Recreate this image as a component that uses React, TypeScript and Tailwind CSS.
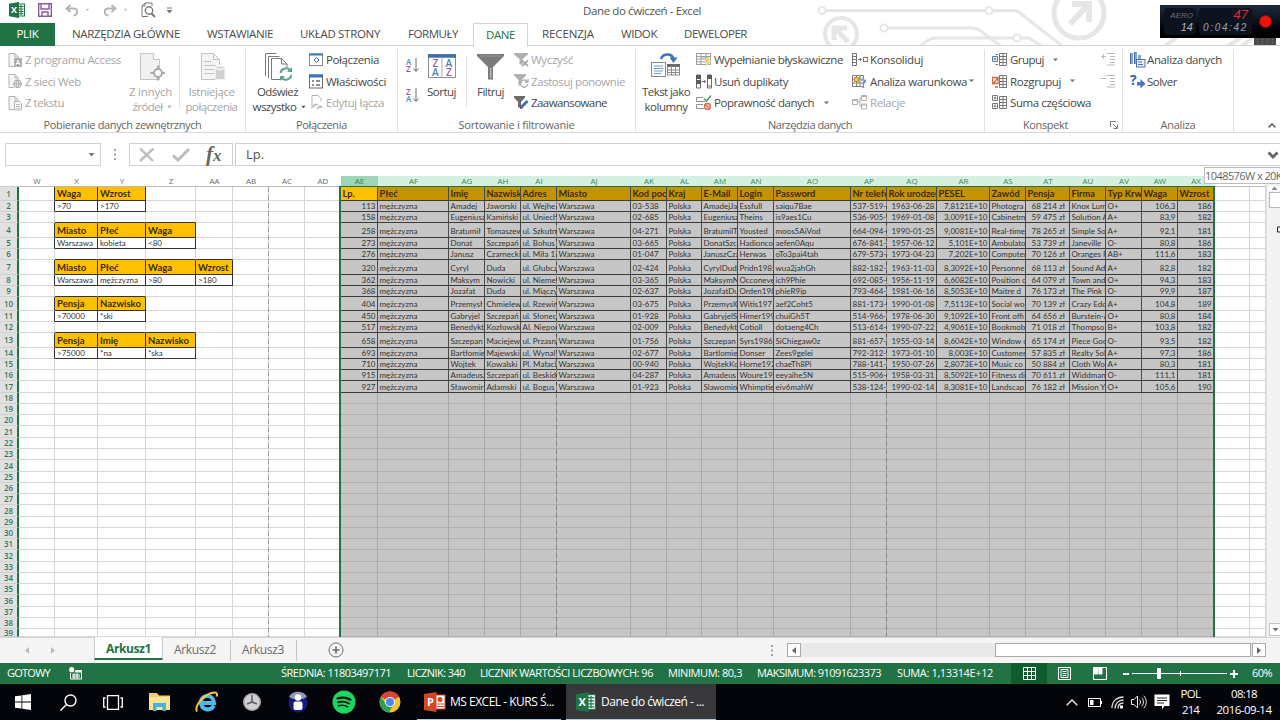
import { useLayoutEffect, useRef, useState } from 'react';
import type { ReactNode } from 'react';
import clsx from 'clsx';

// One-line label that is tracked in or out until it fills `w` pixels
function Fit({ w, className, children }: { w: number; className?: string; children: string }) {
  const ref = useRef<HTMLSpanElement>(null);
  const [spacing, setSpacing] = useState(0);

  useLayoutEffect(() => {
    if (!ref.current) return;
    const natural = ref.current.getBoundingClientRect().width;
    setSpacing((w - natural) / children.length);
  }, [w, children]);

  return (
    <span ref={ref} className={clsx('inline-block whitespace-nowrap shrink-0', className)} style={{ letterSpacing: spacing }}>
      {children}
    </span>
  );
}

const Arrow = ({ className }: { className?: string }) => (
  <svg className={clsx('w-[7px] h-[4px] shrink-0', className)} viewBox="0 0 7 4" fill="currentColor">
    <path d="M0.5 0h6L3.5 3.5z" />
  </svg>
);

/* ---------- icons ---------- */

const Page = ({ children }: { children?: ReactNode }) => (
  <svg className="w-[14px] h-[16px]" viewBox="0 0 14 16" fill="none" stroke="#b3b3b3">
    <path d="M6 14.5H1V1.5h6l3 3V7M7 1.5v3.5h3" fill="#f6f6f6" />
    {children}
  </svg>
);

const AccessIcon = () => (
  <Page>
    <rect x="6.5" y="6.5" width="7" height="8" fill="#a8a8a8" />
    <path d="M8 13l2-5 2 5M8.7 11.5h2.6" stroke="#fff" />
  </Page>
);

const WebIcon = () => (
  <Page>
    <circle cx="9.5" cy="10.8" r="3.9" fill="#eee" stroke="#a6a6a6" />
    <path d="M5.6 10.8h7.8M9.5 7c-2 2.5-2 5.2 0 7.7M9.5 7c2 2.5 2 5.2 0 7.7" stroke="#a6a6a6" />
  </Page>
);

const TextIcon = () => (
  <Page>
    <path d="M6.5 6.5h5l2 2v6.5h-7z" fill="#fafafa" />
    <path d="M8 9.5h4M8 11.5h4M8 13.2h4" strokeWidth="0.8" />
  </Page>
);

const OtherSourcesIcon = () => (
  <svg className="w-[28px] h-[28px]" viewBox="0 0 28 28" fill="none" stroke="#c4c4c4">
    <path d="M3.5 0.5h13l6 6v20h-19z" fill="#f1f1f1" />
    <path d="M16.5 0.5v6h6" fill="#fff" />
    <circle cx="21" cy="20" r="4" fill="#fff" stroke="#a9a9a9" strokeWidth="2" />
    <path d="M21 12.5v4M21 23.5v4M13.5 20h4M24.5 20h3.5" stroke="#a9a9a9" strokeWidth="2" />
  </svg>
);

const ConnectionsBigIcon = () => (
  <svg className="w-[28px] h-[28px]" viewBox="0 0 28 28" fill="none" stroke="#c4c4c4">
    <path d="M3.5 0.5h12l6 6v20h-18z" fill="#f4f4f4" />
    <path d="M15.5 0.5v6h6M6 8.5h7M6 12.5h12M6 16.5h11M6 20.5h10" />
    <path d="M17 14.5v11c0 2 10 2 10 0v-11" fill="#d0d0d0" stroke="#fff" />
    <ellipse cx="22" cy="14.5" rx="5" ry="2" fill="#dcdcdc" stroke="#fff" />
  </svg>
);

const RefreshIcon = () => (
  <svg className="w-[28px] h-[28px]" viewBox="0 0 28 28" fill="none" stroke="#7a7a7a">
    <path d="M1.5 23V0.5h11M4.5 25V3.5h11" />
    <path d="M7.5 5.5h10l5.5 5.5v15.5H7.5z" fill="#fff" />
    <path d="M17.5 5.5V11H23" />
    <circle cx="22" cy="21" r="7" fill="#fff" stroke="none" />
    <path d="M16.5 20c1-5 7-6 9.5-3M27.5 22c-1 5-7 6-9.5 3" stroke="#5aa584" strokeWidth="2" />
    <path d="M28 14v5h-5zM16 28v-5h5z" fill="#5aa584" stroke="none" />
  </svg>
);

const LinkTableIcon = () => (
  <svg className="w-[14px] h-[14px]" viewBox="0 0 14 14" fill="none" stroke="#7d8b99">
    <rect x="0.5" y="1" width="13" height="11.5" fill="#fff" />
    <path d="M0 1.5h14" stroke="#3f73b5" strokeWidth="2" />
    <path d="M7.5 4.5L10 7 7.500 9.500 5 7z" stroke="#3f73b5" />
  </svg>
);

const PropsIcon = () => (
  <svg className="w-[14px] h-[15px]" viewBox="0 0 14 15" fill="none" stroke="#6b6b6b">
    <rect x="0.5" y="1" width="13" height="13" fill="#fff" />
    <path d="M0 2h14" stroke="#3f73b5" strokeWidth="3" />
    <path d="M3 7h2M3 11h2M7 7h4M7 11h4" strokeWidth="1.3" />
  </svg>
);

const EditLinksIcon = () => (
  <svg className="w-[14px] h-[15px]" viewBox="0 0 14 15" fill="none" stroke="#b3b3b3">
    <path d="M3 13.5V0.5h6l3 3v3" />
    <path d="M4 12l2-2.5h3M8 14l3-3 2 1.5" strokeWidth="1.6" />
  </svg>
);

const SortIcon = ({ top, bottom }: { top: string; bottom: string }) => (
  <svg className="w-[14px] h-[17px]" viewBox="0 0 14 17" fontFamily="Open Sans, sans-serif" fontSize="8" fontWeight="600">
    <text x="0" y="7.5" fill={top === 'A' ? '#4a86b8' : '#9055a8'}>{top}</text>
    <text x="0" y="15" fill={bottom === 'A' ? '#4a86b8' : '#9055a8'}>{bottom}</text>
    <path d="M10 1v13M7.5 11.5l2.5 3 2.5-3" fill="none" stroke="#6d6d6d" />
  </svg>
);

const SortBigIcon = () => (
  <svg className="w-[28px] h-[26px]" viewBox="0 0 28 26" fontFamily="Open Sans, sans-serif" fontSize="10" fontWeight="600">
    <rect x="0.5" y="1.5" width="27" height="23" fill="#fff" stroke="#8f8f8f" />
    <path d="M0 3h28" stroke="#3f6fa8" strokeWidth="3.5" />
    <path d="M14 5v19" stroke="#a8a8a8" />
    <text x="4.5" y="14" fill="#9055a8">Z</text>
    <text x="4" y="23" fill="#4a86b8">A</text>
    <text x="17.5" y="14" fill="#4a86b8">A</text>
    <text x="18" y="23" fill="#9055a8">Z</text>
  </svg>
);

const FunnelBigIcon = () => (
  <svg className="w-[27px] h-[28px]" viewBox="0 0 27 28">
    <path d="M0 1h27v2L16 14v12.500h-5V14L0 3z" fill="#7b7b7b" />
    <path d="M13 15h1.500v10H13z" fill="#b9b9b9" />
    <path d="M3 3h21" stroke="#999" />
  </svg>
);

const ClearFilterIcon = () => (
  <svg className="w-[15px] h-[16px]" viewBox="0 0 15 16" fill="none">
    <path d="M0 1h14v1.5L8.5 7v5.5h-3V7L0 2.5z" fill="#b0b0b0" />
    <path d="M8 8.5l6 5.5M14 8.5L8 14" stroke="#a9a9a9" strokeWidth="1.8" />
  </svg>
);

const ReapplyIcon = () => (
  <svg className="w-[15px] h-[16px]" viewBox="0 0 15 16" fill="none">
    <path d="M0 1h12v1.5L7.5 7v5.5h-3V7L0 2.5z" fill="#b0b0b0" />
    <path d="M6.5 10a3.6 3.6 0 016.5-1.5M13.7 11a3.6 3.6 0 01-6.5 1.7M14 6v3h-3" stroke="#a9a9a9" strokeWidth="1.3" />
  </svg>
);

const AdvancedIcon = () => (
  <svg className="w-[15px] h-[16px]" viewBox="0 0 15 16" fill="none">
    <path d="M0 1h11v1.5L7 7v5.5H4V7L0 2.5z" fill="#6b6b6b" />
    <path d="M13.5 6l-6 6" stroke="#3f73b5" strokeWidth="3" />
    <path d="M6 14l0.5-3 2.5 2.3z" fill="#4a4a4a" />
  </svg>
);

const TextToColumnsIcon = () => (
  <svg className="w-[30px] h-[26px]" viewBox="0 0 30 26" fill="none" stroke="#8a8a8a">
    <rect x="0.5" y="9.5" width="14" height="14" fill="#fff" />
    <path d="M3 13h9M3 15.5h9M3 18h9M3 20.5h7" stroke="#6f9ac8" />
    <rect x="16.5" y="12" width="12" height="10" fill="#fff" />
    <path d="M16 12.5h13" strokeWidth="3" stroke="#6b6b6b" />
    <path d="M20.5 13v9M24.5 13v9M16.5 17h12M16.5 19.5h12" />
    <path d="M10 6c2-6 11-6 12.500 0" stroke="#3f73b5" strokeWidth="2.5" />
    <path d="M18.5 4.5h8L22.5 10z" fill="#3f73b5" stroke="none" />
  </svg>
);

const FlashFillIcon = () => (
  <svg className="w-[16px] h-[16px]" viewBox="0 0 16 16" fill="none" stroke="#9c9c9c">
    <path d="M0.5 1.5h14v11H0.5zM0.5 4.5h14M0.5 7h14M0.5 9.8h14M5 2v10.5M10 2v10.5" fill="#fff" />
    <path d="M5.5 5h8" stroke="#80aa80" />
    <path d="M10.5 6h4l-2 3h2.5l-5.5 6.5 1.5-5H9z" fill="#f3c558" stroke="#fff" strokeWidth="0.5" />
  </svg>
);

const DuplicatesIcon = () => (
  <svg className="w-[16px] h-[15px]" viewBox="0 0 16 15" fill="none" stroke="#6a6a6a">
    <path d="M0.5 1h4v13h-4zM11.5 1h4v13h-4z" fill="#fff" />
    <path d="M0 3h5M0 8h5M11 3h5" stroke="#5a5a5a" strokeWidth="4" />
    <path d="M11 12h5M5.5 7.5h4M8 5.8l1.7 1.7L8 9.2" />
  </svg>
);

const ValidationIcon = () => (
  <svg className="w-[16px] h-[16px]" viewBox="0 0 16 16" fill="none" stroke="#8f8f8f">
    <path d="M7 2.5H0.5v4H9M7 9.5H0.5v4H8" />
    <path d="M8 3.5l2.5 2.5L15 0.5" stroke="#4ea072" strokeWidth="1.6" />
    <circle cx="11.5" cy="11.5" r="3" fill="#fbe4e0" stroke="#d9695a" strokeWidth="1.4" />
    <path d="M9.5 9.5l4 4" stroke="#d9695a" strokeWidth="1.2" />
  </svg>
);

const ConsolidateIcon = () => (
  <svg className="w-[16px] h-[14px]" viewBox="0 0 16 14" fill="none" stroke="#737373">
    <path d="M0.5 0.5h4v12h-4zM0.5 3.5h4M0.5 6.5h4M0.5 9.5h4M6 6.5h3M8 5l1.5 1.5L8 8" />
    <rect x="11.5" y="4.5" width="4" height="4" stroke="#c85a54" />
  </svg>
);

const WhatIfIcon = () => (
  <svg className="w-[16px] h-[15px]" viewBox="0 0 16 15" fill="none" stroke="#7d7d7d">
    <path d="M0.5 1.5h11v11h-11zM0.5 5h11M0.5 9h11M4.5 2v10M8 2v10" fill="#fff" />
    <rect x="2.5" y="3.5" width="4" height="4" fill="#f6c25b" stroke="#c79331" />
    <text x="8.5" y="13.5" fontFamily="Open Sans, sans-serif" fontSize="12" fontWeight="700" fill="#3b62a8" stroke="#fff" strokeWidth="0.3">?</text>
  </svg>
);

const RelationsIcon = () => (
  <svg className="w-[16px] h-[15px]" viewBox="0 0 16 15" fill="none" stroke="#b0b0b0">
    <path d="M0.5 4.5h5v5h-5zM9.5 0.5h5v5h-5zM9.5 9h5v5h-5zM5.5 7h2.5V3h1.5M8 7v4.5h1.5" />
    <path d="M0.5 5.5h5M9.5 1.5h5M9.5 10h5" />
  </svg>
);

const GroupIcon = ({ kind }: { kind: 'group' | 'ungroup' | 'subtotal' }) => (
  <svg className="w-[16px] h-[15px]" viewBox="0 0 16 15" fill="none" stroke="#787878">
    <path d="M7.5 1.5h7v12h-7zM7.5 4.5h7M7.5 7.5h7M7.5 10.5h7M11 1.5v12" />
    {kind === 'group' && <path d="M6 2.5H3.5M6 12.5H3.5M0.5 4.5h5v5h-5zM3 5.5v3M1.5 7h3" stroke="#5b7795" />}
    {kind === 'ungroup' && <path d="M0.5 3.5h5.5v6H0.5zM0.5 10.5l6-7.5M3 13h3" stroke="#cf6a45" strokeWidth="1.3" />}
    {kind === 'subtotal' && <path d="M0.5 0.5h5v5h-5zM0.5 8.5h5v5h-5zM3 1.5v3M1.5 3h3M3 9.5v3M1.5 11h3" />}
  </svg>
);

const DetailIcon = ({ plus }: { plus?: boolean }) => (
  <svg className="w-[15px] h-[14px]" viewBox="0 0 15 14" fill="none" stroke="#b9b9b9">
    <path d="M6 1.5h8M9 4.5h5M9 7.5h5M9 10.5h5M6 13h8" />
    <path d="M0 4.5h5" />
    {plus && <path d="M2.5 2v5" />}
  </svg>
);

const AnalysisIcon = () => (
  <svg className="w-[16px] h-[16px]" viewBox="0 0 16 16" fill="none">
    <path d="M0 1h3v11H0zM4 0h3v12H4zM8 3h3v6H8z" fill="#8aa6cf" />
    <path d="M0.5 1v11M4.5 0v12" stroke="#4a6fae" />
    <rect x="6.5" y="7.5" width="8.5" height="7.5" fill="#eef3fb" stroke="#4a6fae" />
    <path d="M8 10h4M8 12.5h5" stroke="#4a6fae" />
  </svg>
);

const SolverIcon = () => (
  <svg className="w-[16px] h-[16px]" viewBox="0 0 16 16">
    <text x="0" y="12" fontFamily="Open Sans, sans-serif" fontSize="14" fontWeight="700" fill="#3462b5">?</text>
    <path d="M7 9h3.500V6l5 4.700-5 4.700v-3H7z" fill="#4a77c7" />
  </svg>
);

const ExcelLogo = ({ className }: { className?: string }) => (
  <svg className={className} viewBox="0 0 16 16" fontFamily="Open Sans, sans-serif" fontSize="9" fontWeight="700">
    <rect x="8" y="2" width="7.5" height="12" fill="#fff" stroke="#217346" />
    <path d="M9.5 4.5h5M9.5 7h5M9.5 9.5h5M9.5 11.8h5M12 3v10" stroke="#217346" />
    <path d="M0 1.7L10 0v16L0 14.3z" fill="#217346" />
    <text x="2" y="11.2" fill="#fff">X</text>
  </svg>
);

/* ---------- title bar and tabs ---------- */

const Circuit = () => (
  <svg className="absolute right-0 top-0 w-[480px] h-[45px]" viewBox="800 0 480 45" fill="none" stroke="#e6e6e6" strokeWidth="3">
    <circle cx="822" cy="10.5" r="3.5" strokeWidth="2" />
    <path d="M826 10.5h159" />
    <circle cx="989" cy="10.5" r="3.5" strokeWidth="2" />
    <path d="M993 10.5h20c5 0 7 2 10 5l40 31" />
    <circle cx="884" cy="28" r="3.5" strokeWidth="2" />
    <path d="M888 28h85c4 0 6 2 9 4l20 15" />
    <path d="M921 46c5-6 10-8 16-8h76" />
    <circle cx="1017" cy="38" r="3.5" strokeWidth="2" />
    <path d="M1021 38h8l14 9" />
    <circle cx="841" cy="34" r="16" strokeWidth="4" />
    <path d="M848 42l-12-13M834 40V28h13" strokeWidth="5" />
    <circle cx="1079" cy="13" r="25" strokeWidth="5" />
    <path d="M1070 24l18-19M1072 4h17v18" strokeWidth="6" />
    <path d="M1165 46l12-9M1228 46l14-9M1242 46l10-8" strokeWidth="4" />
  </svg>
);

const Recorder = () => (
  <div className="absolute left-[1160px] top-[5px] w-[120px]">
    <div className="h-[33px] bg-gradient-to-b from-[#1d2a3c] via-[#0b111b] to-black flex items-center gap-[3px] pl-1 italic font-['Liberation_Sans',sans-serif]">
      <div className="w-[32px] h-[27px] rounded-sm bg-[#0c131e] flex flex-col items-end justify-center pr-[3px]">
        <span className="text-[8px] leading-[11px] text-[#68717e]">AERO</span>
        <span className="text-[11px] leading-[13px] text-[#a9b1bc]">14</span>
      </div>
      <div className="w-[53px] h-[27px] rounded-sm bg-[#0c131e] flex flex-col items-end justify-center pr-[4px]">
        <span className="text-[13px] leading-[12px] text-[#e02a35]">47</span>
        <Fit w={45} className="text-[10px] leading-[13px] text-[#99a1ad]">0:04:42</Fit>
      </div>
      <span className="w-[13px] h-[13px] ml-[4px] rounded-full bg-[#f01208] border border-[#7d1010]" />
    </div>
    <div className="ml-[94px] w-[22px] h-[7px] bg-[#4a4a4a] text-[5px] leading-[7px] text-center text-[#999]">⋮⋮⋮⋮</div>
  </div>
);

const QuickAccess = () => (
  <div className="h-[23px] flex items-center pl-[9px] pb-[3px]">
    <ExcelLogo className="w-[16px] h-[16px]" />
    <svg className="w-[14px] h-[14px] ml-[13px]" viewBox="0 0 14 14" fill="none" stroke="#8a5aa6" strokeWidth="1.4">
      <path d="M0.7 0.7h12.6v12.6H0.7zM3 1v5h8V1M4 13V9h6v4" />
    </svg>
    <svg className="w-[14px] h-[13px] ml-[13px] text-[#b5b5b5]" viewBox="0 0 14 13" fill="none" stroke="currentColor" strokeWidth="2">
      <path d="M5.5 1L1.5 4.5l4 3.5M2 4.5h6.5c5 0 5 6.5 0 7" />
    </svg>
    <Arrow className="ml-[5px] text-[#c9c9c9] scale-75" />
    <svg className="w-[14px] h-[13px] ml-[12px] text-[#b5b5b5]" viewBox="0 0 14 13" fill="none" stroke="currentColor" strokeWidth="2">
      <path d="M8.5 1l4 3.5-4 3.5M12 4.5H5.5c-5 0-5 6.5 0 7" />
    </svg>
    <Arrow className="ml-[5px] text-[#c9c9c9] scale-75" />
    <svg className="w-[15px] h-[16px] ml-[12px]" viewBox="0 0 15 16" fill="none" stroke="#777">
      <path d="M11 4V1H4L1 4v10.5h6M4 1v3H1" />
      <circle cx="8" cy="8.5" r="3.7" fill="#fff" strokeWidth="1.4" />
      <path d="M10.5 11.5l3.5 3.5" strokeWidth="2" />
    </svg>
    <svg className="w-[7px] h-[7px] ml-[10px]" viewBox="0 0 7 7" fill="#777">
      <path d="M1 0.5h5v1H1zM0.5 3h6L3.5 6.5z" />
    </svg>
  </div>
);

const Tabs = () => (
  <div className="h-[23px] flex items-center text-[11.5px] text-[#4b4b4b] border-b border-[#d4d4d4]">
    <div className="w-[55px] h-[23px] bg-[#217346] text-white flex items-center justify-center">
      <Fit w={22}>PLIK</Fit>
    </div>
    <Fit w={108} className="ml-[17px]">NARZĘDZIA GŁÓWNE</Fit>
    <Fit w={66} className="ml-[27px]">WSTAWIANIE</Fit>
    <Fit w={80} className="ml-[27px]">UKŁAD STRONY</Fit>
    <Fit w={50} className="ml-[28px]">FORMUŁY</Fit>
    <div className="ml-[15px] w-[55px] h-[24px] -mb-px bg-white border border-b-0 border-[#d4d4d4] text-[#217346] flex items-center justify-center pb-px z-10">
      <Fit w={29}>DANE</Fit>
    </div>
    <Fit w={52} className="ml-[14px]">RECENZJA</Fit>
    <Fit w={36} className="ml-[27px]">WIDOK</Fit>
    <Fit w={63} className="ml-[27px]">DEWELOPER</Fit>
  </div>
);

/* ---------- ribbon ---------- */

type ToolProps = { icon: ReactNode; w: number; label: string; dim?: boolean; arrow?: string; iconBox?: string };

const Tool = ({ icon, w, label, dim, arrow, iconBox = 'w-[17px]' }: ToolProps) => (
  <div className={clsx('h-[21.5px] flex items-center', dim ? 'text-[#a6a6a6]' : 'text-[#484848]')}>
    <span className={clsx('shrink-0', iconBox)}>{icon}</span>
    <Fit w={w}>{label}</Fit>
    {arrow && <Arrow className={clsx('text-[#777] scale-90', arrow)} />}
  </div>
);

const BigTool = ({ icon, lines, className, dim, arrow }: { icon: ReactNode; lines: [string, number][]; className: string; dim?: boolean; arrow?: boolean }) => (
  <div className={clsx('flex flex-col items-center pt-[4px] shrink-0', dim ? 'text-[#a6a6a6]' : 'text-[#484848]', className)}>
    <div className="h-[31px]">{icon}</div>
    {lines.map(([text, w], i) => (
      <div key={text} className="h-[15px] leading-[15px] flex items-center gap-[3px]">
        <Fit w={w}>{text}</Fit>
        {arrow && i === lines.length - 1 && <Arrow className="scale-75 -mr-1" />}
      </div>
    ))}
  </div>
);

const Group = ({ className, title, titleW, launcher, children }: { className: string; title: string; titleW: number; launcher?: boolean; children: ReactNode }) => (
  <div className={clsx('h-[83px] mt-[3px] flex flex-col shrink-0 border-r border-[#e1e1e1]', className)}>
    <div className="h-[69px] flex">{children}</div>
    <div className="h-[14px] flex items-center justify-center text-[#666] text-[11px]">
      <Fit w={titleW} className={launcher ? 'ml-[38px]' : ''}>{title}</Fit>
      {launcher && (
        <svg className="w-[8px] h-[8px] ml-auto mr-[4px]" viewBox="0 0 8 8" fill="none" stroke="#777">
          <path d="M0.5 6V0.5H6M3 3l4 4M7.5 3.5v4h-4" />
        </svg>
      )}
    </div>
  </div>
);

const Divider = () => <div className="w-px h-[51px] mt-[7px] bg-[#e1e1e1] shrink-0" />;

const Ribbon = () => (
  <div className="h-[87px] flex text-[11.5px] border-b border-[#d9d9d9]">
    <Group className="w-[246px]" title="Pobieranie danych zewnętrznych" titleW={158}>
      <div className="w-[124px] pl-[8px]">
        <Tool dim icon={<AccessIcon />} label="Z programu Access" w={96} />
        <Tool dim icon={<WebIcon />} label="Z sieci Web" w={56} />
        <Tool dim icon={<TextIcon />} label="Z tekstu" w={39} />
      </div>
      <BigTool dim arrow className="w-[53px]" icon={<OtherSourcesIcon />} lines={[['Z innych', 43], ['źródeł', 30]]} />
      <div className="w-[2px]" />
      <Divider />
      <BigTool dim className="w-[63px]" icon={<ConnectionsBigIcon />} lines={[['Istniejące', 46], ['połączenia', 52]]} />
    </Group>

    <Group className="w-[152px]" title="Połączenia" titleW={51}>
      <BigTool arrow className="w-[63px]" icon={<RefreshIcon />} lines={[['Odśwież', 41], ['wszystko', 44]]} />
      <div>
        <Tool icon={<LinkTableIcon />} label="Połączenia" w={53} />
        <Tool icon={<PropsIcon />} label="Właściwości" w={60} />
        <Tool dim icon={<EditLinksIcon />} label="Edytuj łącza" w={58} />
      </div>
    </Group>

    <Group className="w-[238px]" title="Sortowanie i filtrowanie" titleW={116}>
      <div className="w-[28px] pl-[8px] pt-[8px] flex flex-col gap-[13px]">
        <SortIcon top="A" bottom="Z" />
        <SortIcon top="Z" bottom="A" />
      </div>
      <BigTool className="w-[31px]" icon={<SortBigIcon />} lines={[['Sortuj', 29]]} />
      <div className="w-[9px]" />
      <Divider />
      <BigTool className="w-[47px]" icon={<FunnelBigIcon />} lines={[['Filtruj', 27]]} />
      <div>
        <Tool dim icon={<ClearFilterIcon />} label="Wyczyść" w={42} />
        <Tool dim icon={<ReapplyIcon />} label="Zastosuj ponownie" w={94} />
        <Tool icon={<AdvancedIcon />} label="Zaawansowane" w={76} />
      </div>
    </Group>

    <Group className="w-[349px]" title="Narzędzia danych" titleW={84}>
      <BigTool className="w-[60px]" icon={<TextToColumnsIcon />} lines={[['Tekst jako', 48], ['kolumny', 43]]} />
      <div className="w-[156px]">
        <Tool iconBox="w-[18px]" icon={<FlashFillIcon />} label="Wypełnianie błyskawiczne" w={129} />
        <Tool iconBox="w-[18px]" icon={<DuplicatesIcon />} label="Usuń duplikaty" w={74} />
        <Tool iconBox="w-[18px]" icon={<ValidationIcon />} label="Poprawność danych" w={100} arrow="ml-[9px]" />
      </div>
      <div>
        <Tool iconBox="w-[18px]" icon={<ConsolidateIcon />} label="Konsoliduj" w={53} />
        <Tool iconBox="w-[18px]" icon={<WhatIfIcon />} label="Analiza warunkowa" w={97} arrow="ml-[1px]" />
        <Tool iconBox="w-[18px]" dim icon={<RelationsIcon />} label="Relacje" w={35} />
      </div>
    </Group>

    <Group className="w-[138px]" title="Konspekt" titleW={45} launcher>
      <div className="w-[116px] pl-[7px]">
        <Tool iconBox="w-[18px]" icon={<GroupIcon kind="group" />} label="Grupuj" w={34} arrow="ml-[8px]" />
        <Tool iconBox="w-[18px]" icon={<GroupIcon kind="ungroup" />} label="Rozgrupuj" w={51} arrow="ml-[8px]" />
        <Tool iconBox="w-[18px]" icon={<GroupIcon kind="subtotal" />} label="Suma częściowa" w={81} />
      </div>
      <div className="pt-[3px] flex flex-col gap-[8px]">
        <DetailIcon plus />
        <DetailIcon />
      </div>
    </Group>

    <Group className="w-[111px]" title="Analiza" titleW={35}>
      <div className="pl-[7px]">
        <Tool icon={<AnalysisIcon />} label="Analiza danych" w={75} />
        <Tool icon={<SolverIcon />} label="Solver" w={30} />
      </div>
    </Group>

    <svg className="w-[8px] h-[5px] ml-[34px] mt-[77px]" viewBox="0 0 8 5" fill="none" stroke="#666" strokeWidth="1.7">
      <path d="M0.7 4.3L4 1l3.3 3.3" />
    </svg>
  </div>
);

const FormulaBar = () => (
  <div className="h-[43px] pt-[10px] flex text-[#555]">
    <div className="w-[96px] h-[23px] ml-[5px] border border-[#d0d0d0] flex items-center justify-end pr-[5px]">
      <Arrow className="text-[#777]" />
    </div>
    <div className="w-[28px] flex justify-center pt-[6px]">
      <svg className="w-[2px] h-[11px]" viewBox="0 0 2 11" fill="#a5a5a5">
        <path d="M0 0h2v2H0zM0 4.5h2v2H0zM0 9h2v2H0z" />
      </svg>
    </div>
    <div className="w-[104px] h-[23px] border border-[#d0d0d0] flex items-center pl-[9px]">
      <svg className="w-[16px] h-[14px]" viewBox="0 0 16 14" stroke="#bdbdbd" strokeWidth="2.4">
        <path d="M1 0.5l13 12.5M14.5 0.5L1 13" />
      </svg>
      <svg className="w-[18px] h-[14px] ml-[17px]" viewBox="0 0 18 14" fill="none" stroke="#bdbdbd" strokeWidth="3">
        <path d="M1 7.5l5 4.5L17 1" />
      </svg>
      <span className="ml-[16px] -mt-[1px] italic font-bold text-[21px] leading-none text-[#666] font-['Liberation_Serif',serif]">
        f<span className="text-[17px]">x</span>
      </span>
    </div>
    <div className="flex-1 h-[23px] ml-[2px] border border-r-0 border-[#d0d0d0] flex items-center pl-[10px] pr-[1px]">
      <Fit w={18} className="text-[13px] text-[#555]">Lp.</Fit>
      <svg className="w-[12px] h-[8px] ml-auto" viewBox="0 0 12 8" fill="none" stroke="#666" strokeWidth="2.8">
        <path d="M1.5 1.5L6 6l4.5-4.5" />
      </svg>
    </div>
  </div>
);

/* ---------- sheet ---------- */

const columns = ['W', 'X', 'Y', 'Z', 'AA', 'AB', 'AC', 'AD', 'AE', 'AF', 'AG', 'AH', 'AI', 'AJ', 'AK', 'AL', 'AM', 'AN', 'AO', 'AP', 'AQ', 'AR', 'AS', 'AT', 'AU', 'AV', 'AW', 'AX', '', ''];
const FIRST = 8;
const LAST = 27;

const people = [
  'Lp.|Płeć|Imię|Nazwisko|Adres|Miasto|Kod pocztowy|Kraj|E-Mail|Login|Password|Nr telefonu|Rok urodzenia|PESEL|Zawód|Pensja|Firma|Typ Krwi|Waga|Wzrost',
  '113|mężczyzna|Amadej|Jaworski|ul. Wejhe|Warszawa|03-538|Polska|AmadejJaw|Essfull|saiqu7Bae|537-519-|1963-06-28|7,8121E+10|Photogra|68 214 zł|Knox Lumb|O+|106,3|186',
  '158|mężczyzna|Eugeniusz|Kamiński|ul. Uniech|Warszawa|02-685|Polska|Eugeniusz|Theins|is9aes1Cu|536-905-|1969-01-08|3,0091E+10|Cabinetm|59 475 zł|Solution A|A+|83,9|182',
  '258|mężczyzna|Bratumił|Tomaszew|ul. Szkutn|Warszawa|04-271|Polska|BratumilT|Yousted|moos5AiVod|664-094-|1990-01-25|9,0081E+10|Real-time|78 265 zł|Simple So|A+|92,1|181',
  '273|mężczyzna|Donat|Szczepań|ul. Bohus|Warszawa|03-665|Polska|DonatSzc|Hadionco|aefen0Aqu|676-841-|1957-06-12|5,101E+10|Ambulato|53 739 zł|Janeville|O-|80,8|186',
  '276|mężczyzna|Janusz|Czarnecki|ul. Miła 17|Warszawa|01-047|Polska|JanuszCza|Herwas|oTo3pai4tah|679-573-|1973-04-23|7,202E+10|Computer|70 126 zł|Oranges R|AB+|111,6|183',
  '320|mężczyzna|Cyryl|Duda|ul. Głubcz|Warszawa|02-424|Polska|CyrylDuda|Pridn1985|wua2jahGh|882-182-|1963-11-03|8,3092E+10|Personne|68 113 zł|Sound Ad|A+|82,8|182',
  '362|mężczyzna|Maksym|Nowicki|ul. Niemen|Warszawa|03-365|Polska|MaksymN|Occoneve|ich9Phie|692-085-|1956-11-19|6,6082E+10|Position c|64 079 zł|Town and|O+|94,3|183',
  '368|mężczyzna|Jozafat|Duda|ul. Miączy|Warszawa|02-637|Polska|JozafatDu|Orden198|phieR9ip|793-464-|1981-06-16|8,5053E+10|Maitre d|76 173 zł|The Pink P|O-|99,9|187',
  '404|mężczyzna|Przemysł|Chmielew|ul. Rzewin|Warszawa|03-675|Polska|PrzemyslC|Witis197|aef2Coht5|881-173-|1990-01-08|7,5113E+10|Social wo|70 139 zł|Crazy Edd|A+|104,8|189',
  '450|mężczyzna|Gabryjel|Szczepań|ul. Słonec|Warszawa|01-928|Polska|GabryjelS|Himer199|chuiGh5T|514-966-|1978-06-30|9,1092E+10|Front offi|64 656 zł|Burstein-A|O+|80,8|184',
  '517|mężczyzna|Benedykt|Kozłowsk|Al. Niepod|Warszawa|02-009|Polska|Benedykt|Cotioll|dotaeng4Ch|513-614-|1990-07-22|4,9061E+10|Bookmob|71 018 zł|Thompso|B+|103,8|182',
  '658|mężczyzna|Szczepan|Maciejew|ul. Przasn|Warszawa|01-756|Polska|Szczepan|Syrs1986|SiChiegaw0z|881-657-|1955-03-14|8,6042E+10|Window c|65 174 zł|Piece Goo|O-|93,5|182',
  '693|mężczyzna|Bartłomiej|Majewski|ul. Wynal|Warszawa|02-677|Polska|Bartlomie|Donser|Zees9gelei|792-312-|1973-01-10|8,003E+10|Customer|57 835 zł|Realty Sol|A+|97,3|186',
  '710|mężczyzna|Wojtek|Kowalski|Pl. Małach|Warszawa|00-940|Polska|WojtekKo|Horne192|chaeTh8Pi|788-141-|1950-07-26|2,8073E+10|Music co|50 884 zł|Cloth Wo|A+|80,3|181',
  '915|mężczyzna|Amadeusz|Szczepań|ul. Beskid|Warszawa|04-287|Polska|Amadeus|Woure19|eeyaihe5N|515-906-|1958-03-31|8,5092E+10|Fitness di|70 611 zł|Widdman|O-|111,1|181',
  '927|mężczyzna|Sławomir|Adamski|ul. Bogus|Warszawa|01-923|Polska|SlawomirA|Whimptie|eiv6mahW|538-124-|1990-02-14|8,3081E+10|Landscap|76 182 zł|Mission Y|O+|105,6|190',
].map(line => line.split('|'));

// Criteria ranges, keyed by row; every list starts in column X
const criteria: Record<number, string[]> = {
  1: ['Waga', 'Wzrost'],
  2: ['>70', '>170'],
  4: ['Miasto', 'Płeć', 'Waga'],
  5: ['Warszawa', 'kobieta', '<80'],
  7: ['Miasto', 'Płeć', 'Waga', 'Wzrost'],
  8: ['Warszawa', 'mężczyzna', '>80', '>180'],
  10: ['Pensja', 'Nazwisko'],
  11: ['>70000', '*ski'],
  13: ['Pensja', 'Imię', 'Nazwisko'],
  14: ['>75000', '*na', '*ska'],
};

const rightAligned = [0, 12, 13, 15, 18, 19];
const tallRows = [4, 7, 10, 13];

function Cell({ row, col }: { row: number; col: number }) {
  const base = 'overflow-hidden whitespace-nowrap flex items-end border-r border-b';

  if (col >= FIRST && col <= LAST) {
    const i = col - FIRST;
    const text = people[row - 1]?.[i];
    if (text === undefined) {
      return <div className={clsx(base, 'bg-[#c6c6c6] border-b-[#b0b0b0] border-r-[#a9a9a9]')} />;
    }
    const head = row === 1;
    return (
      <div
        className={clsx(
          base,
          'border-b-[#3b3b3b] border-r-[#4a4a4a]',
          head ? 'font-bold text-[9.3px] leading-[12px] text-[#3a2c00] pl-[1.5px]' : 'text-[8px] leading-[9px] text-[#333] px-[1.5px]',
          head ? (i === 0 ? 'bg-[#ffc000]' : 'bg-[#c49300]') : 'bg-[#c6c6c6]',
          !head && rightAligned.includes(i) && 'justify-end',
          !head && i === 15 && 'pr-[4px]',
          tallRows.includes(row) && 'pb-[1.5px]',
        )}
      >
        {text}
      </div>
    );
  }

  const text = criteria[row]?.[col - 1];
  if (text !== undefined) {
    const head = Boolean(criteria[row + 1]);
    return (
      <div
        className={clsx(
          base,
          'border-[#333] pl-[2px]',
          head ? 'bg-[#ffc000] font-bold text-[9.5px] leading-[12px] text-[#3a2c00]' : 'text-[8px] leading-[9px] text-[#333]',
        )}
      >
        {text}
      </div>
    );
  }

  // an empty cell still draws the edge it shares with a criteria range
  const leftOfRange = col === 0 && criteria[row];
  const aboveRange = criteria[row + 1]?.[col - 1] !== undefined;
  return (
    <div className={clsx(base, leftOfRange ? 'border-r-[#333]' : 'border-r-[#d6d6d6]', aboveRange ? 'border-b-[#333]' : 'border-b-[#d6d6d6]')} />
  );
}

const Sheet = () => (
  <div className="relative h-[461px] flex bg-[#f3f3f3] overflow-hidden">
    <div className="w-[1266px] shrink-0 bg-white grid font-['Lato',sans-serif] grid-cols-[19px_36px_43px_48px_50px_37px_36px_36px_36px_37px_71px_36px_36px_36px_74px_36px_35px_36px_36px_77px_36px_50px_53px_36px_44px_36px_36px_36px_36px_36px_16px] grid-rows-[11px_14px_11px_11px_15px_11px_11px_15px_11px_11px_14px_11px_11px_15px_11px_11px_11px_12px_11px_11px_11px_12px_11px_11px_12px_11px_11px_11px_12px_11px_11px_11px_12px_11px_11px_11px_12px_11px_11px_8px]">
      <div className="border-b border-[#cfcfcf]" />
      {columns.map((name, col) => (
        <div
          key={col}
          className={clsx(
            "overflow-hidden text-center text-[8px] leading-[10px] border-b font-['Open_Sans',sans-serif]",
            col === FIRST && 'bg-[#9fd5b7] text-[#2f7d55] border-[#217346]',
            col > FIRST && col <= LAST && 'bg-[#d3f0e0] text-[#3a8560] border-[#217346]',
            (col < FIRST || col > LAST) && 'text-[#6a6a6a] border-[#b9b9b9]',
          )}
        >
          {name}
        </div>
      ))}
      {Array.from({ length: 39 }, (_, r) => r + 1).map(row => [
        <div
          key={`h${row}`}
          className="overflow-hidden flex items-center justify-center bg-[#e1e1e1] border-b border-b-[#d0d0d0] border-r-2 border-r-[#217346] text-[8px] leading-[10px] font-semibold text-[#35795a] font-['Open_Sans',sans-serif]"
        >
          {row}
        </div>,
        ...columns.map((_, col) => <Cell key={`${row}-${col}`} row={row} col={col} />),
      ])}
    </div>

    {/* selection frame and page breaks */}
    <div className="absolute left-[339px] top-[10px] w-[876px] h-[460px] border-2 border-t-0 border-[#217346]" />
    <div className="absolute left-[341px] top-[10px] w-[872px] h-px bg-[#217346]" />
    <svg className="absolute left-0 top-[11px] w-[1266px] h-[450px]" viewBox="0 0 1266 450" stroke="#a0a0a0" strokeDasharray="5 3">
      <path d="M268.5 0V450" />
      <path d="M556.5 14V450M886.5 14V450" stroke="#858585" />
    </svg>

    <div className="flex-1 flex flex-col items-end border-l border-[#e0e0e0]">
      <div className="w-[11px] mt-[10px] h-[5px] flex justify-center bg-white">
        <Arrow className="text-[#888] rotate-180" />
      </div>
      <div className="w-[11px] h-[16px] mt-[1px] bg-white border border-r-0 border-[#b5b5b5]" />
      <div className="w-[11px] h-[13px] mt-auto mb-[1px] bg-white border border-r-0 border-[#c5c5c5] flex items-center justify-center">
        <Arrow className="text-[#777]" />
      </div>
    </div>
    <svg className="absolute right-0 top-[50px] w-[3px] h-[8px]" viewBox="0 0 3 8" fill="none" stroke="#222">
      <path d="M3 1H0.5v5H3" />
    </svg>
  </div>
);

const SheetTabs = () => (
  <div className="h-[26px] bg-[#f5f5f5] border-b border-b-white flex text-[12px] text-[#6a6a6a] border-t border-t-[#d5d5d5]">
    <div className="w-[94px] flex items-center gap-[22px] pl-[25px] text-[#bbb]">
      <svg className="w-[4px] h-[7px]" viewBox="0 0 4 7" fill="currentColor"><path d="M4 0v7L0 3.5z" /></svg>
      <svg className="w-[4px] h-[7px]" viewBox="0 0 4 7" fill="currentColor"><path d="M0 0v7l4-3.5z" /></svg>
    </div>
    <div className="w-[69px] h-[23px] -mt-px bg-white border-x border-[#c9c9c9] border-b-2 border-b-[#217346] text-[#217346] font-bold flex items-center justify-center pt-[2px]">
      <Fit w={45}>Arkusz1</Fit>
    </div>
    <div className="w-[68px] h-[21px] mt-[2px] border-r border-[#c5c5c5] flex items-center pl-[11px] pb-[2px]">
      <Fit w={42}>Arkusz2</Fit>
    </div>
    <div className="w-[66px] h-[21px] mt-[2px] border-r border-[#c5c5c5] flex items-center pl-[11px] pb-[2px]">
      <Fit w={42}>Arkusz3</Fit>
    </div>
    <svg className="w-[16px] h-[16px] ml-[31px] mt-[4px]" viewBox="0 0 16 16" fill="none" stroke="#6f6f6f">
      <circle cx="8" cy="8" r="7" />
      <path d="M8 4.5v7M4.5 8h7" strokeWidth="1.7" />
    </svg>
    <svg className="w-[2px] h-[11px] ml-auto mt-[7px]" viewBox="0 0 2 11" fill="#a5a5a5">
      <path d="M0 0h2v2H0zM0 4.5h2v2H0zM0 9h2v2H0z" />
    </svg>
    <div className="w-[479px] h-[14px] ml-[14px] mr-[14px] mt-[5px] bg-[#e9e9e9] flex">
      <div className="w-[14px] bg-white border border-[#aaa] flex items-center justify-center">
        <svg className="w-[4px] h-[7px]" viewBox="0 0 4 7" fill="#666"><path d="M4 0v7L0 3.5z" /></svg>
      </div>
      <div className="w-[256px] ml-auto bg-white border border-[#aaa]" />
      <div className="w-[14px] ml-px bg-white border border-[#aaa] flex items-center justify-center">
        <svg className="w-[4px] h-[7px]" viewBox="0 0 4 7" fill="#666"><path d="M0 0v7l4-3.5z" /></svg>
      </div>
    </div>
  </div>
);

const StatusBar = () => (
  <div className="h-[21px] bg-[#217346] text-white text-[11px] flex items-center">
    <Fit w={43} className="ml-[7px]">GOTOWY</Fit>
    <svg className="w-[13px] h-[13px] ml-[19px]" viewBox="0 0 13 13" fill="none" stroke="#fff">
      <path d="M1.5 6v6h11V3.5H7" />
      <path d="M3 8h8M3 10h8M5 6v6M8 6v6" />
      <path d="M6 4.5h6.5" strokeWidth="2" />
      <circle cx="2.7" cy="2.7" r="2.6" fill="#fff" stroke="none" />
    </svg>
    <Fit w={110} className="ml-[199px]">ŚREDNIA: 11803497171</Fit>
    <Fit w={58} className="ml-[16px]">LICZNIK: 340</Fit>
    <Fit w={173} className="ml-[15px]">LICZNIK WARTOŚCI LICZBOWYCH: 96</Fit>
    <Fit w={74} className="ml-[15px]">MINIMUM: 80,3</Fit>
    <Fit w={124} className="ml-[15px]">MAKSIMUM: 91091623373</Fit>
    <Fit w={96} className="ml-[16px]">SUMA: 1,13314E+12</Fit>
    <div className="w-[36px] h-[21px] ml-[18px] bg-[#0e5c2f] flex items-center justify-center">
      <svg className="w-[13px] h-[13px]" viewBox="0 0 13 13" fill="none" stroke="#fff">
        <path d="M0.5 0.5h12v12H0.5zM0.5 4.5h12M0.5 8.5h12M4.5 0.5v12M8.5 0.5v12" />
      </svg>
    </div>
    <svg className="w-[13px] h-[13px] ml-[11px]" viewBox="0 0 13 13" fill="none" stroke="#fff">
      <path d="M0.5 0.5h12v12H0.5zM3 2.5h7v8H3zM4.5 4.5h4M4.5 6.5h4M4.5 8.5h4" />
    </svg>
    <svg className="w-[14px] h-[13px] ml-[22px]" viewBox="0 0 14 13" fill="none" stroke="#fff">
      <path d="M0.5 0.5h13v12H0.5z" />
      <path d="M1 1h4v6H1zM6 1h3v6H6z" fill="#fff" />
    </svg>
    <svg className="w-[116px] h-[13px] ml-[16px]" viewBox="0 0 116 13" stroke="#fff" fill="#fff">
      <path d="M0 7h6M107 7h8M111 3v8" strokeWidth="2" />
      <path d="M9 6.5h95M57.5 4v5" />
      <path d="M34.5 1.5h3v10h-3z" />
    </svg>
    <Fit w={20} className="ml-[13px]">60%</Fit>
  </div>
);

/* ---------- Windows taskbar ---------- */

const Taskbar = () => (
  <div className="h-[36px] bg-[#04050b] text-white flex items-center text-[12px]">
    <svg className="w-[16px] h-[16px] ml-[15px]" viewBox="0 0 16 16" fill="#fff">
      <path d="M0 2.3l6.5-0.9v6.2H0zM7.3 1.3L16 0v7.6H7.3zM0 8.4h6.5v6.2L0 13.7zM7.3 8.4H16V16l-8.7-1.3z" />
    </svg>
    <svg className="w-[17px] h-[17px] ml-[29px]" viewBox="0 0 17 17" fill="none" stroke="#fff" strokeWidth="1.4">
      <circle cx="10.5" cy="6.5" r="5.5" />
      <path d="M6.5 10.5L0.5 16.5" />
    </svg>
    <svg className="w-[20px] h-[15px] ml-[26px]" viewBox="0 0 20 15" fill="none" stroke="#fff" strokeWidth="1.3">
      <path d="M4.5 0.7h11v13.6h-11zM2.5 3H0.7v9h1.8M17.5 3h1.8v9h-1.8" />
    </svg>
    <svg className="w-[22px] h-[20px] ml-[26px]" viewBox="0 0 22 20">
      <path d="M0 1h8l2 2.5h11V18H0z" fill="#f3cf6b" />
      <path d="M0 5h21v13H0z" fill="#fbe394" />
      <path d="M4 11h13v8h-3.5v-4h-6v4H4z" fill="#45b1e1" />
    </svg>
    <svg className="w-[24px] h-[22px] ml-[24px]" viewBox="0 0 24 22" fill="none">
      <path d="M19 14.5c-3.5 6-13 5-13-3.5 0-8 12.5-8.5 13 1H7" stroke="#4fb9ec" strokeWidth="4" />
      <path d="M2 20.5C-1 15 10 1.5 20 1.5c2 0 2.5 2 1.5 4" stroke="#f5c93b" strokeWidth="2" />
    </svg>
    <svg className="w-[20px] h-[20px] ml-[23px]" viewBox="0 0 20 20">
      <circle cx="10" cy="10" r="9" fill="#a9a9b0" />
      <circle cx="10" cy="10" r="7.5" fill="#cfcfd4" />
      <path d="M10 3v7l5 2M10 10l-5 2" stroke="#5b5b62" strokeWidth="1.5" fill="none" />
    </svg>
    <svg className="w-[20px] h-[22px] ml-[26px]" viewBox="0 0 20 22">
      <circle cx="10" cy="12" r="9.5" fill="#151a83" />
      <path d="M1 6c3-7 15-7 18 0l-4 2H5z" fill="#8f96b8" />
      <circle cx="10" cy="6.5" r="3.3" fill="#fff" />
      <rect x="5.5" y="10.5" width="9" height="8.5" rx="2" fill="#fff" />
    </svg>
    <svg className="w-[24px] h-[24px] ml-[24px]" viewBox="0 0 24 24" fill="none" stroke="#07140b" strokeLinecap="round">
      <circle cx="12" cy="12" r="11.5" fill="#1ed760" stroke="none" />
      <path d="M5.5 8.5c4-1.3 9.5-0.8 13 1.2" strokeWidth="2.2" />
      <path d="M6 12.3c3.5-1 8-0.6 11 1.2" strokeWidth="1.8" />
      <path d="M6.5 15.8c3-0.8 6.5-0.5 9.3 1.1" strokeWidth="1.5" />
    </svg>
    <svg className="w-[22px] h-[22px] ml-[23px]" viewBox="0 0 22 22">
      <circle cx="11" cy="11" r="10.5" fill="#f4c430" />
      <path d="M11 11L1.9 5.8A10.5 10.5 0 0120.1 5.8z" fill="#dc4437" />
      <path d="M1.9 5.8a10.5 10.5 0 008 15.6L15 12.5 7 13z" fill="#2f9e55" />
      <circle cx="11" cy="11" r="5" fill="#fff" />
      <circle cx="11" cy="11" r="4" fill="#4a87ee" />
    </svg>
    <div className="w-[144px] h-[36px] ml-[16px] border-b border-[#b9c9dc] flex items-center pl-[7px]">
      <svg className="w-[22px] h-[20px]" viewBox="0 0 22 20" fontFamily="Open Sans, sans-serif" fontSize="11" fontWeight="700">
        <rect x="10" y="3" width="11" height="14" fill="#fff" stroke="#d24726" />
        <circle cx="16" cy="7.5" r="2.5" fill="#d24726" />
        <path d="M13 12h7M13 14.5h7" stroke="#d24726" />
        <path d="M0 2l12.5-2v20L0 18z" fill="#d24726" />
        <text x="3" y="14" fill="#fff">P</text>
      </svg>
      <Fit w={104} className="ml-[4px]">MS EXCEL - KURS Ś...</Fit>
    </div>
    <div className="w-[150px] h-[36px] ml-[5px] bg-[#38383b] border-b border-[#b9c9dc] flex items-center pl-[10px]">
      <ExcelLogo className="w-[20px] h-[20px]" />
      <Fit w={103} className="ml-[5px]">Dane do ćwiczeń - ...</Fit>
    </div>
    <svg className="w-[12px] h-[7px] ml-auto" viewBox="0 0 12 7" fill="none" stroke="#ddd" strokeWidth="1.5">
      <path d="M0.7 6.3L6 1l5.3 5.3" />
    </svg>
    <svg className="w-[14px] h-[9px] ml-[10px]" viewBox="0 0 14 9" fill="none" stroke="#fff">
      <path d="M0.5 0.5h12v8h-12zM13.5 3v3" />
      <path d="M2 2h3.5v5H2z" fill="#fff" stroke="none" />
    </svg>
    <svg className="w-[13px] h-[13px] ml-[9px]" viewBox="0 0 13 13" fill="none" stroke="#ddd" strokeWidth="1.3">
      <path d="M1 12C1 5 6 1 12.5 1M4 12.5C4 7.5 7.5 4 12.5 4M7 12.5C7 9 9 7 12.5 7" />
      <path d="M9 9.5h3v3H9z" fill="#fff" stroke="none" />
    </svg>
    <svg className="w-[16px] h-[14px] ml-[7px]" viewBox="0 0 16 14" fill="none" stroke="#eee">
      <path d="M0.5 4.5h2.5l3.5-3.5v12L3 9.5H0.5zM8.5 4.5c1.2 1.5 1.2 3.5 0 5M10.7 2.7c2.3 2.5 2.3 6 0 8.6M12.8 0.8c3.3 3.7 3.3 8.7 0 12.4" />
    </svg>
    <svg className="w-[16px] h-[16px] ml-[7px]" viewBox="0 0 16 16">
      <path d="M0.5 0.5h15v11.5h-5L8 15.5V12H0.5z" fill="#fff" />
      <path d="M3 4h10M3 6.5h10M3 9h7" stroke="#222" />
    </svg>
    <div className="w-[21px] ml-[10px] flex flex-col items-center leading-[16px] text-[11.5px]">
      <Fit w={20}>POL</Fit>
      <Fit w={17}>214</Fit>
    </div>
    <div className="w-[56px] ml-[15px] mr-[8px] flex flex-col items-center leading-[16px] text-[11.5px]">
      <Fit w={26}>08:18</Fit>
      <Fit w={55}>2016-09-14</Fit>
    </div>
  </div>
);

export default function App() {
  return (
    <div className="relative w-[1280px] h-[720px] overflow-hidden bg-white flex flex-col font-['Open_Sans','Noto_Sans',sans-serif]">
      <div className="relative h-[46px]">
        <Circuit />
        <div className="absolute left-[583px] top-[3px] text-[11.5px] leading-[16px] text-[#555]">
          <Fit w={118}>Dane do ćwiczeń - Excel</Fit>
        </div>
        <QuickAccess />
        <Tabs />
      </div>
      <Ribbon />
      <FormulaBar />
      <Sheet />
      <SheetTabs />
      <StatusBar />
      <Taskbar />
      <Recorder />
      <div className="absolute left-[1204px] top-[167px] w-[80px] h-[17px] bg-white border border-[#bcbcbc] text-[11px] leading-[15px] text-[#666]">
        <Fit w={77}>1048576W x 20K</Fit>
      </div>
    </div>
  );
}
